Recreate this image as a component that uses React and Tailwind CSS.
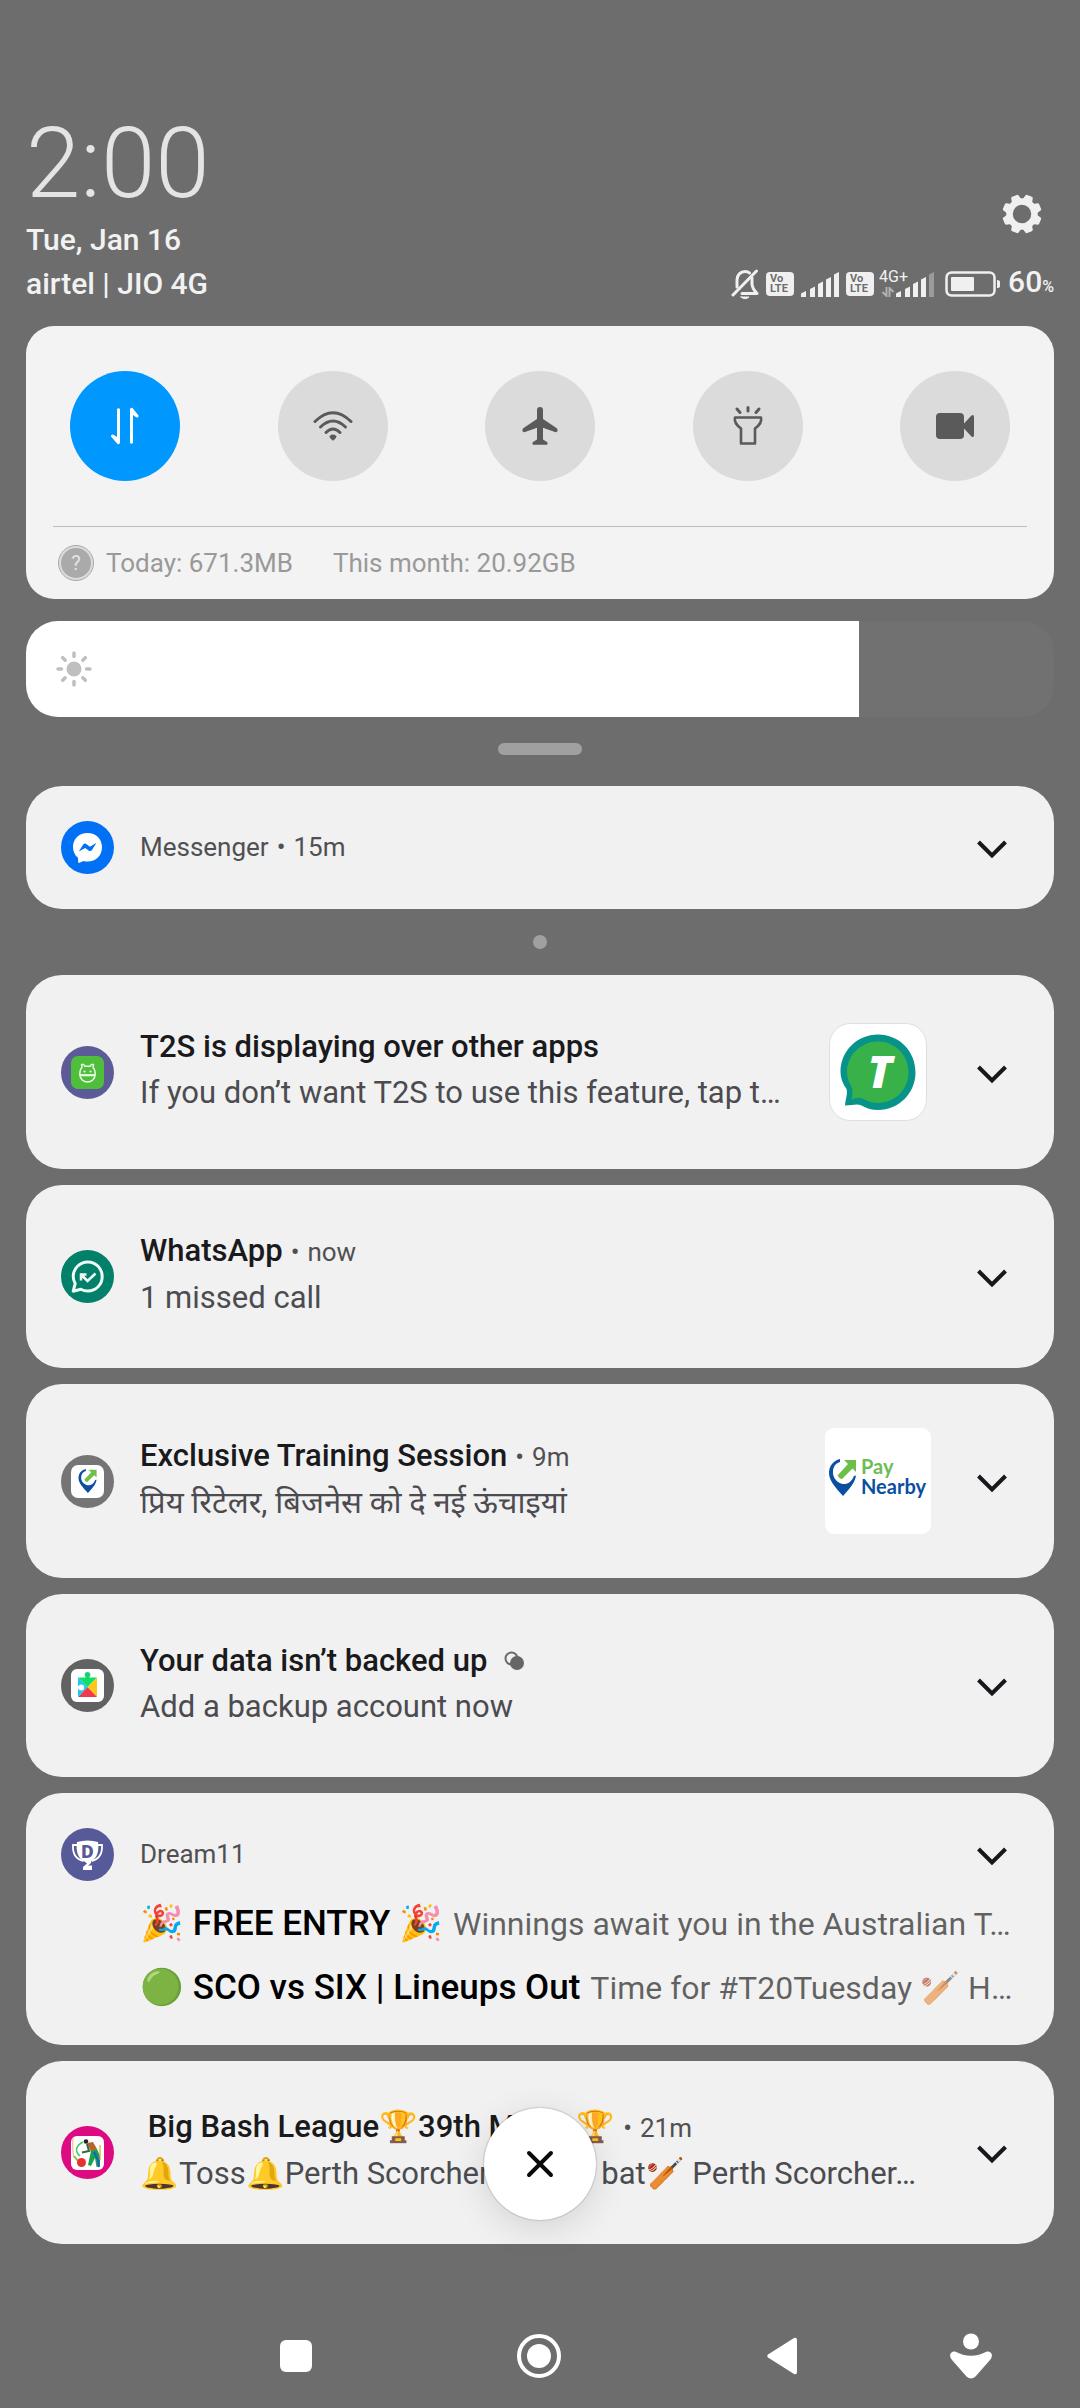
import { useState } from 'react'

const tiles = [
  { name: 'Mobile data', icon: DataIcon, on: true },
  { name: 'Wi-Fi', icon: WifiIcon },
  { name: 'Airplane mode', icon: PlaneIcon },
  { name: 'Torch', icon: TorchIcon },
  { name: 'Screen recorder', icon: CameraIcon }
]

const alerts = [
  {
    title: 'T2S is displaying over other apps',
    text: 'If you don’t want T2S to use this feature, tap t…',
    icon: DroidBadge,
    image: T2SLogo
  },
  { title: 'WhatsApp', time: 'now', text: '1 missed call', icon: WhatsAppBadge },
  {
    title: 'Exclusive Training Session',
    time: '9m',
    text: 'प्रिय रिटेलर, बिजनेस को दे नई ऊंचाइयां',
    icon: PayNearbyBadge,
    image: PayNearbyLogo
  },
  { title: 'Your data isn’t backed up', text: 'Add a backup account now', icon: PlayBadge, grouped: true }
]

const dreamLines = [
  { title: '🎉 FREE ENTRY 🎉', text: 'Winnings await you in the Australian T…' },
  { title: '🟢 SCO vs SIX | Lineups Out', text: 'Time for #T20Tuesday 🏏 H…' }
]

/* ---------- status bar ---------- */

function GearIcon() {
  return (
    <svg width="40" height="40" viewBox="-20 -20 40 40" fill="#f0f0f0">
      <circle r="12.5" fill="none" stroke="#f0f0f0" strokeWidth="6.5" />
      {[22.5, 67.5, 112.5, 157.5, 202.5, 247.5, 292.5, 337.5].map((a) => (
        <path key={a} d="M-5 -14 L-4 -18.5 Q-3.6 -19.6 -2.5 -19.6 H2.5 Q3.6 -19.6 4 -18.5 L5 -14 Z" transform={`rotate(${a})`} />
      ))}
    </svg>
  )
}

function MutedBellIcon() {
  return (
    <svg width="28" height="32" viewBox="0 0 28 32" fill="none" stroke="#f0f0f0" strokeWidth="3" strokeLinecap="round" strokeLinejoin="round">
      <path d="M21 10 V16 Q21 20 26 25.500 H11" />
      <path d="M6 19 V12 C6 7 9.500 3.500 14 3.500 C16 3.500 17.500 4 18.500 5" />
      <path d="M25.500 3 L2 27" />
      <path d="M10 29 H18 Q14 32.500 10 29 Z" fill="#f0f0f0" strokeWidth="1" />
    </svg>
  )
}

function VolteBadge() {
  return (
    <span className="flex h-6 w-7 flex-col justify-center rounded bg-[#f0f0f0] pl-1 text-[11px] leading-[10px] font-bold text-[#6d6d6d]">
      <span>Vo</span>
      <span>LTE</span>
    </span>
  )
}

function SignalIcon({ weak }) {
  return (
    <svg width="38" height="25" viewBox="0 0 38 25" fill="#f0f0f0">
      <path d="M0 25 V21.500 L5 19 V25 Z" />
      <path d="M9 25 V17 L14 14.500 V25 Z" />
      <path d="M17 25 V12 L22 9.500 V25 Z" />
      <path d="M25 25 V7.500 L30 5 V25 Z" />
      <path d="M33 25 V2.500 L38 0 V25 Z" opacity={weak ? 0.35 : 1} />
    </svg>
  )
}

function BatteryIcon() {
  return (
    <svg width="56" height="26" viewBox="0 0 56 26">
      <rect x="1.500" y="1.500" width="48" height="23" rx="5" fill="none" stroke="#f0f0f0" strokeWidth="2.500" />
      <rect x="6" y="6" width="23" height="14" rx="1" fill="#f0f0f0" />
      <path d="M52 9 Q55 9 55 11 V15 Q55 17 52 17 Z" fill="#f0f0f0" />
    </svg>
  )
}

function StatusBar() {
  return (
    <header className="px-[26px] pt-[110px] text-[#f2f2f2]">
      <div className="flex items-end justify-between">
        <div>
          <h1 className="text-[98px] leading-[108px] font-light text-[#e4e4e4]">2:00</h1>
          <p className="text-[30px] leading-[44px] font-medium">Tue, Jan 16</p>
        </div>
        <button aria-label="Settings" className="mb-4 flex h-16 w-16 items-center justify-center">
          <GearIcon />
        </button>
      </div>
      <div className="flex h-11 items-center justify-between">
        <p className="text-[30px] leading-[44px] font-medium">airtel | JIO 4G</p>
        <div className="flex items-center gap-[7px]">
          <MutedBellIcon />
          <VolteBadge />
          <SignalIcon />
          <VolteBadge />
          <div className="relative ml-[15px]">
            <span className="absolute -top-[3px] -left-[17px] text-[16px] leading-4">4G+</span>
            <svg className="absolute bottom-0 -left-[14px]" width="12" height="10" viewBox="0 0 12 10" fill="none" stroke="#b0b0b0" strokeWidth="2">
              <path d="M4.500 0 V9 L0.500 5" />
              <path d="M7.500 10 V1 L11.500 5" />
            </svg>
            <SignalIcon weak />
          </div>
          <div className="ml-1">
            <BatteryIcon />
          </div>
          <p className="text-[30px] leading-[44px] font-medium">
            60<span className="text-[16px]">%</span>
          </p>
        </div>
      </div>
    </header>
  )
}

/* ---------- quick settings ---------- */

function DataIcon() {
  return (
    <svg width="40" height="40" viewBox="0 0 40 40" fill="#fff">
      <path d="M12 3 Q13.500 1.500 15 3 V37 Q14 38.800 12.500 38 L6 30.500 Q6 28 8.500 28.800 L12 31 Z" />
      <path d="M25 37 Q26.500 38.500 28 37 V9 L31.500 11.500 Q34 12 33.500 9.500 L27.500 2 Q26 1.200 25 3 Z" />
    </svg>
  )
}

function WifiIcon() {
  return (
    <svg width="44" height="40" viewBox="0 0 44 40" fill="none" stroke="#5a5a5a" strokeWidth="3" strokeLinecap="round">
      <path d="M4 15.500 Q22 -2 40 15.500" />
      <path d="M9.500 21 Q22 9 34.500 21" />
      <path d="M15 26.500 Q22 19.500 29 26.500" />
      <path d="M19.500 30.500 Q22 28.500 24.500 30.500 Q24.500 31.500 22 33.500 Q19.500 31.500 19.500 30.500 Z" fill="#5a5a5a" strokeWidth="2" />
    </svg>
  )
}

function PlaneIcon() {
  return (
    <svg width="40" height="40" viewBox="0 0 40 40" fill="#5a5a5a">
      <path d="M17 4 Q17 1 20 1 Q23 1 23 4 V13 L36.500 22 Q38 23 37.500 25 Q37 26.500 35 26 L23 21.800 V33.500 L27 36 Q28.500 38.500 26.500 38.800 H13.500 Q11.500 38.500 13 36 L17 33.500 V21.800 L5 26 Q3 26.500 2.500 25 Q2 23 3.500 22 L17 13 Z" />
    </svg>
  )
}

function TorchIcon() {
  return (
    <svg width="40" height="42" viewBox="0 0 40 42" fill="none" stroke="#5a5a5a" strokeWidth="2.600" strokeLinecap="round" strokeLinejoin="round">
      <path d="M20 2.500 V6 M9 4 L12 7.500 M31 4 L28 7.500" strokeWidth="3" />
      <path d="M7 12.500 H33 Q34.500 18 27 23.500 V38.500 H13 V23.500 Q5.500 18 7 12.500 Z" />
    </svg>
  )
}

function CameraIcon() {
  return (
    <svg width="40" height="28" viewBox="0 0 40 28" fill="#5a5a5a">
      <rect x="1" y="1" width="28" height="26" rx="4" />
      <path d="M28 12.500 L36.500 3.500 Q39 2 39 5 V23 Q39 26 36.500 24.500 L28 15.500 Z" />
    </svg>
  )
}

function QuickPanel() {
  return (
    <section className="mt-5 rounded-[28px] bg-[#f3f3f3]">
      <div className="flex justify-between px-11 py-[45px]">
        {tiles.map(({ name, icon: Icon, on }) => (
          <button
            key={name}
            aria-label={name}
            aria-pressed={!!on}
            className={`flex h-[110px] w-[110px] items-center justify-center rounded-full ${on ? 'bg-[#0097ff]' : 'bg-[#dbdbdb]'}`}
          >
            <Icon />
          </button>
        ))}
      </div>
      <div className="mx-[27px] border-t border-[#bdbdbd]" />
      <div className="flex h-[72px] items-center pl-8 text-[26px] text-[#999]">
        <span className="mr-3 flex h-9 w-9 items-center justify-center rounded-full border border-[#a8a8a8] bg-[#dcdcdc] p-[2px]">
          <span className="flex h-full w-full items-center justify-center rounded-full bg-[#aaa] text-[20px] leading-none text-[#e4e4e4]">?</span>
        </span>
        <span>Today: 671.3MB</span>
        <span className="ml-10">This month: 20.92GB</span>
      </div>
    </section>
  )
}

function Brightness() {
  const [level, setLevel] = useState(81)
  return (
    <div className="relative mt-[22px] h-24">
      <input
        type="range"
        aria-label="Brightness"
        value={level}
        onChange={(e) => setLevel(Number(e.target.value))}
        className="block h-full w-full appearance-none rounded-[32px] [&::-webkit-slider-thumb]:opacity-0"
        style={{ background: `linear-gradient(to right, #fff ${level}%, #717171 ${level}%)` }}
      />
      <svg className="pointer-events-none absolute top-[30px] left-[30px]" width="36" height="36" viewBox="-18 -18 36 36">
        <circle r="7.500" fill="#bfbfbf" />
        {[0, 45, 90, 135, 180, 225, 270, 315].map((a) => (
          <path key={a} d="M0 -12.500 V-16" stroke="#bfbfbf" strokeWidth="3.500" strokeLinecap="round" transform={`rotate(${a})`} />
        ))}
      </svg>
    </div>
  )
}

/* ---------- app badges ---------- */

function Badge({ color, children }) {
  return (
    <svg className="shrink-0" width="53" height="53" viewBox="0 0 53 53">
      <circle cx="26.500" cy="26.500" r="26.500" fill={color} />
      {children}
    </svg>
  )
}

function MessengerBadge() {
  return (
    <Badge color="#0070f5">
      <path d="M26.500 12 C18 12 12 18 12 26 C12 30.500 13.800 34.200 17 36.800 L17.200 41 Q17.300 42.300 18.600 41.800 L22.500 40 C23.800 40.400 25.200 40.500 26.500 40.500 C35 40.500 41 34.500 41 26.200 C41 18 35 12 26.500 12 Z" fill="#fff" />
      <path d="M17.800 30.500 L22.200 23.600 Q23.600 21.800 25.600 23.200 L29 25.700 L35.400 21.800 L31 29 Q29.600 30.900 27.600 29.500 L24.200 27 Z" fill="#0070f5" />
    </Badge>
  )
}

function DroidBadge() {
  return (
    <Badge color="#5c5b97">
      <rect x="10" y="10" width="33" height="33" rx="7" fill="#4fbf3b" />
      <g fill="none" stroke="#e8f8e4" strokeWidth="1.500" strokeLinejoin="round">
        <path d="M19 29 C18.500 25 19.500 23 21 21.500 L20.500 18.500 H22.500 L24 20.200 H29 L30.500 18.500 H32.500 L32 21.500 C33.500 23 34.500 25 34 29 C34 33 30.500 36 26.500 36 C22.500 36 19 33 19 29 Z" />
        <path d="M18.500 29.200 H34.500" strokeWidth="2.200" />
      </g>
      <circle cx="23.500" cy="25.500" r="1.100" fill="#e8f8e4" />
      <circle cx="29.500" cy="25.500" r="1.100" fill="#e8f8e4" />
    </Badge>
  )
}

function WhatsAppBadge() {
  return (
    <Badge color="#038069">
      <g fill="none" stroke="#effaf6" strokeWidth="3">
        <path d="M12.200 41.200 L14.200 33.500 C12.800 31 12.200 29 12.200 26.500 C12.200 18.500 18.700 12 26.800 12 C35 12 41.200 18.500 41.200 26.500 C41.200 34.500 35 41 26.800 41 C24.200 41 22 40.400 19.800 39.200 Z" strokeLinejoin="round" />
        <path d="M20 30.500 V24.500 H25.500 M20.500 25 L26.500 31 L34.500 23.500" strokeWidth="2.500" />
      </g>
    </Badge>
  )
}

// map pin with the arrow, drawn in a 27 x 37 box
function Pin() {
  return (
    <>
      <path d="M11 0 C4 1.500 0 7.500 0 14 C0 22 7 29 14 37 C20 30 26 24 27 16.500 L25 17 C22.500 23.500 17 26.500 12 24.500 C6 22 3.500 17 4 12 C4.500 7 7 4 11 3 Z" fill="#0b4ea2" />
      <path d="M15 1 H27 V13 L23.500 9.500 L13 20 Q10.500 20 8.500 16.500 L19 5 Z" fill="#6cc04a" />
    </>
  )
}

function PayNearbyBadge() {
  return (
    <Badge color="#757575">
      <rect x="10" y="10" width="33" height="33" rx="7" fill="#fff" />
      <g transform="translate(17.500 14) scale(0.670 0.650)">
        <Pin />
      </g>
    </Badge>
  )
}

function PlayBadge() {
  return (
    <Badge color="#626262">
      <rect x="10" y="10" width="33" height="33" rx="6" fill="#fff" />
      <path d="M17 18.500 H36 L26.500 28 Z" fill="#0fe06c" />
      <path d="M36 18.500 V38 L26.500 28 Z" fill="#ffc61a" />
      <path d="M36 38 H17 L26.500 28 Z" fill="#ee3a4c" />
      <path d="M17 38 V18.500 L26.500 28 Z" fill="#1cc8ee" />
      <circle cx="26.500" cy="15.800" r="2.800" fill="#12d46a" />
      <path d="M24.800 16 H28.200 V20 H24.800 Z" fill="#12d46a" />
      <circle cx="20.300" cy="28.500" r="2.900" fill="#fff" />
      <path d="M16 27 H20 V30 H16 Z" fill="#fff" />
    </Badge>
  )
}

function DreamBadge() {
  return (
    <Badge color="#575a98">
      <path d="M16 14 Q26.500 11 37 14 C38.500 24 35.500 31 30 33 V35 Q28 37 26.500 37.500 H31 V42 H22 V39 L26 35.500 L23.500 33.500 C17.500 31 14.500 24 16 14 Z" fill="#fff" />
      <path d="M16 17 H12 C11.500 25 14 31 22.500 33 M37 17 H41 C41.500 25 39 31 30.500 33" fill="none" stroke="#fff" strokeWidth="1.800" />
      <text x="26.500" y="30" textAnchor="middle" fontSize="19" fontWeight="900" fill="#575a98">D</text>
    </Badge>
  )
}

function CricketBadge() {
  return (
    <Badge color="#dd0a82">
      <rect x="10" y="10" width="33" height="34" rx="6" fill="#fff" />
      <path d="M12 12 Q11 24 13 32" fill="none" stroke="#f3c9a0" strokeWidth="1.500" />
      <path d="M22 16 C14 20 14 26 19 30" fill="none" stroke="#3ec96d" strokeWidth="1.500" />
      <path d="M13 30 L17 35" stroke="#8bc34a" strokeWidth="2" />
      <circle cx="20.500" cy="36.500" r="4.500" fill="#e8302f" />
      <circle cx="25" cy="15.500" r="2.300" fill="#222" />
      <path d="M26 17 L32 16 L36 23 L30 26 Z" fill="#b8642a" />
      <path d="M26 18 L28 25 L21 26.500" fill="none" stroke="#2c6b45" strokeWidth="2" />
      <path d="M30 25 L36 23 L39 30 L39 40 L35.500 41 L34 32 L30 40 L27 39 Z" fill="#16a34a" />
      <path d="M33 26 L37 34 L38 41" fill="none" stroke="#1c5fc4" strokeWidth="2.200" />
      <path d="M39 19 V34" stroke="#e0a030" strokeWidth="1.200" />
    </Badge>
  )
}

/* ---------- large pictures ---------- */

function T2SLogo() {
  return (
    <svg width="98" height="98" viewBox="0 0 98 98">
      <rect x="0.500" y="0.500" width="97" height="97" rx="21" fill="#fff" stroke="#dedede" />
      <path d="M49 11.500 C28 11.500 11.500 28 11.500 49 C11.500 55.500 14 61 17.500 66 C19 70 16.500 76 16 82.500 C23 82.500 28 80.500 32.500 82.500 C38 85.500 43 87 49 87 C70 87 86.500 70 86.500 49.500 C86.500 28 70 11.500 49 11.500 Z" fill="#07928a" />
      <path d="M49 18.500 C32 18.500 18 32 18 49 C18 55 20 60 22.500 63.500 Q24.500 70 22.500 76.500 Q30 73 35.500 76.500 C40 79 44.500 80 49 80 C66 80 79.500 66 79.500 49.500 C79.500 32 66 18.500 49 18.500 Z" fill="#39b149" />
      <text x="51" y="65" textAnchor="middle" fontSize="45" fontWeight="800" fontStyle="italic" fontFamily="Open Sans, sans-serif" fill="#fff">T</text>
    </svg>
  )
}

function PayNearbyLogo() {
  return (
    <svg width="106" height="106" viewBox="0 0 106 106">
      <rect width="106" height="106" rx="9" fill="#fff" />
      <g transform="translate(4 31)">
        <Pin />
      </g>
      <g fontFamily="Lato, sans-serif" fontSize="20" fontWeight="700">
        <text x="36" y="46" fill="#6cbd55">Pay</text>
        <text x="36" y="66" fill="#0b4ea2">Nearby</text>
      </g>
    </svg>
  )
}

/* ---------- notifications ---------- */

function Expand() {
  return (
    <button aria-label="Expand" className="flex h-16 w-16 shrink-0 items-center justify-center pt-[3px]">
      <svg width="32" height="20" viewBox="0 0 32 20" fill="none" stroke="#17171c" strokeWidth="4">
        <path d="M2.500 3 L16 16.500 L29.500 3" />
      </svg>
    </button>
  )
}

function Alert({ title, time, text, icon: Icon, image: Image, grouped }) {
  return (
    <article className={`flex items-center rounded-[36px] bg-[#f1f1f1] pr-[30px] pl-[35px] ${Image ? 'h-[194px]' : 'h-[183px]'}`}>
      <Icon />
      <div className="ml-[26px] min-w-0 flex-1 pb-1">
        <div className="flex items-baseline text-[31px] leading-[46px]">
          <h2 className="font-medium whitespace-pre text-[#1a1a1d]">{title}</h2>
          {time && (
            <span className="ml-2 flex gap-2 text-[26px] text-[#505053]">
              <span>•</span>
              {time}
            </span>
          )}
          {grouped && (
            <svg className="ml-[17px]" width="22" height="20" viewBox="0 0 22 20">
              <circle cx="7.500" cy="7.500" r="6" fill="none" stroke="#6a6a6a" strokeWidth="2" />
              <circle cx="13" cy="12" r="7" fill="#666" />
            </svg>
          )}
        </div>
        <p className="truncate text-[31px] leading-[46px] text-[#4b4b50]">{text}</p>
      </div>
      {Image && (
        <div className="ml-8 flex w-[106px] shrink-0 justify-center">
          <Image />
        </div>
      )}
      <div className="ml-[29px]">
        <Expand />
      </div>
    </article>
  )
}

function DreamAlert() {
  return (
    <article className="rounded-[36px] bg-[#f1f1f1] pt-[35px] pb-[25px]">
      <div className="mb-[11px] flex h-[53px] items-center pr-[30px] pl-[35px]">
        <DreamBadge />
        <h2 className="ml-[26px] flex-1 text-[26px] text-[#505053]">Dream11</h2>
        <Expand />
      </div>
      {dreamLines.map((line) => (
        <p key={line.title} className="flex h-16 items-baseline gap-[10px] overflow-hidden pr-8 pl-[114px] text-[32px] leading-[64px] whitespace-nowrap">
          <b className="text-[35px] font-medium text-black">{line.title}</b>
          <span className="text-black/60">{line.text}</span>
        </p>
      ))}
    </article>
  )
}

/* ---------- bottom bar ---------- */

function NavBar() {
  return (
    <nav className="mt-auto flex h-[104px] items-center pr-[42px] pl-[174px]">
      <button aria-label="Recent apps" className="flex flex-1 justify-center">
        <span className="h-8 w-8 rounded-md bg-white" />
      </button>
      <button aria-label="Home" className="flex flex-1 justify-center">
        <span className="flex h-11 w-11 items-center justify-center rounded-full border-4 border-white">
          <span className="h-6 w-6 rounded-full bg-white" />
        </span>
      </button>
      <button aria-label="Back" className="flex flex-1 justify-center">
        <svg width="30" height="38" viewBox="0 0 30 38" fill="#fff">
          <path d="M1 17.500 L27 1 Q30 0 30 3 V35 Q30 38 27 37 L1 20.500 Q-0.500 19 1 17.500 Z" />
        </svg>
      </button>
      <button aria-label="Accessibility" className="flex w-[134px] justify-center">
        <svg width="42" height="46" viewBox="0 0 42 46" fill="#fff">
          <circle cx="21" cy="8.500" r="8" />
          <path d="M5 18.500 Q21 27 37 18.500 Q41 18 42 22 Q42 24.500 40 27 L25.500 43.500 Q21 47.500 16.500 43.500 L2 27 Q0 24.500 0 22 Q1 18 5 18.500 Z" />
        </svg>
      </button>
    </nav>
  )
}

export default function App() {
  return (
    <div className="flex min-h-screen flex-col bg-[#6d6d6d] font-[Roboto,'Noto_Sans',sans-serif]">
      <StatusBar />
      <main className="px-[26px]">
        <QuickPanel />
        <Brightness />
        <div className="mx-auto mt-[26px] h-3 w-[84px] rounded-full bg-[#a0a0a0]" />

        <article className="mt-[31px] flex h-[123px] items-center rounded-[36px] bg-[#f1f1f1] pr-[30px] pl-[35px]">
          <MessengerBadge />
          <h2 className="ml-[26px] flex flex-1 gap-2 text-[26px] text-[#505053]">
            Messenger <span>•</span> 15m
          </h2>
          <Expand />
        </article>
        <div className="mx-auto my-[26px] h-[14px] w-[14px] rounded-full bg-[#a0a0a0]" />

        <div className="flex flex-col gap-4">
          {alerts.map((alert) => (
            <Alert key={alert.title} {...alert} />
          ))}
          <DreamAlert />
          <div className="relative">
            <Alert
              title=" Big Bash League🏆39th Match🏆"
              time="21m"
              text="🔔Toss🔔Perth Scorchers opt to bat🏏 Perth Scorcher…"
              icon={CricketBadge}
            />
            <button
              aria-label="Clear all"
              className="absolute top-[47px] left-1/2 flex h-28 w-28 -translate-x-1/2 items-center justify-center rounded-full bg-white shadow-[0_8px_36px_rgba(0,0,0,0.12),0_0_2px_rgba(0,0,0,0.4)]"
            >
              <svg width="28" height="28" viewBox="0 0 28 28" stroke="#0a0a0a" strokeWidth="4" strokeLinecap="round">
                <path d="M3 3 L25 25 M25 3 L3 25" />
              </svg>
            </button>
          </div>
        </div>
      </main>
      <NavBar />
    </div>
  )
}
